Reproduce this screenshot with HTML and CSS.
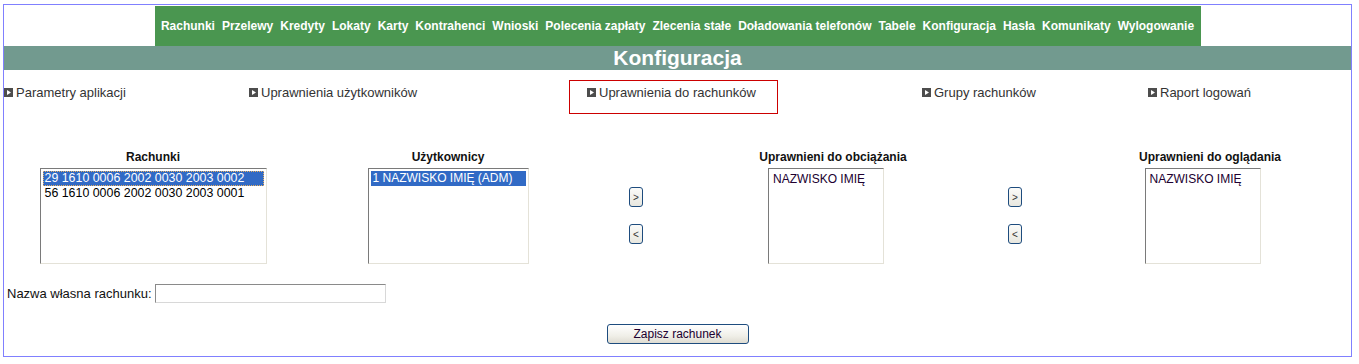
FILE: index.html
```html
<!DOCTYPE html>
<html lang="pl">
<head>
<meta charset="utf-8">
<title>Konfiguracja</title>
<link rel="stylesheet" href="styles.css">
</head>
<body>
<div class="frame">
  <nav class="menu">
    <a>Rachunki</a><a>Przelewy</a><a>Kredyty</a><a>Lokaty</a><a>Karty</a><a>Kontrahenci</a><a>Wnioski</a><a>Polecenia zapłaty</a><a>Zlecenia stałe</a><a>Doładowania telefonów</a><a>Tabele</a><a>Konfiguracja</a><a>Hasła</a><a>Komunikaty</a><a>Wylogowanie</a>
  </nav>
  <div class="title">Konfiguracja</div>
  <div class="tabs">
    <div class="tab t1"><svg class="ico" width="9" height="9" viewBox="0 0 9 9"><rect width="9" height="9" fill="#4d4d4d"/><path d="M3 2 L7 4.5 L3 7 Z" fill="#fff"/></svg>Parametry aplikacji</div>
    <div class="tab t2"><svg class="ico" width="9" height="9" viewBox="0 0 9 9"><rect width="9" height="9" fill="#4d4d4d"/><path d="M3 2 L7 4.5 L3 7 Z" fill="#fff"/></svg>Uprawnienia użytkowników</div>
    <div class="tab t3"><div class="active"><svg class="ico" width="9" height="9" viewBox="0 0 9 9"><rect width="9" height="9" fill="#4d4d4d"/><path d="M3 2 L7 4.5 L3 7 Z" fill="#fff"/></svg>Uprawnienia do rachunków</div></div>
    <div class="tab t4"><svg class="ico" width="9" height="9" viewBox="0 0 9 9"><rect width="9" height="9" fill="#4d4d4d"/><path d="M3 2 L7 4.5 L3 7 Z" fill="#fff"/></svg>Grupy rachunków</div>
    <div class="tab t5"><svg class="ico" width="9" height="9" viewBox="0 0 9 9"><rect width="9" height="9" fill="#4d4d4d"/><path d="M3 2 L7 4.5 L3 7 Z" fill="#fff"/></svg>Raport logowań</div>
  </div>
  <div class="lists">
    <div class="col c1">
      <div class="head">Rachunki</div>
      <div class="listbox lb1">
        <div class="opt sel focus">29 1610 0006 2002 0030 2003 0002</div>
        <div class="opt">56 1610 0006 2002 0030 2003 0001</div>
      </div>
    </div>
    <div class="col c2">
      <div class="head">Użytkownicy</div>
      <div class="listbox lb2">
        <div class="opt sel">1 NAZWISKO IMIĘ (ADM)</div>
      </div>
    </div>
    <div class="col btns c3">
      <button class="mv">&gt;</button>
      <button class="mv">&lt;</button>
    </div>
    <div class="col c4">
      <div class="head">Uprawnieni do obciążania</div>
      <div class="listbox lb3 shift14">
        <div class="opt">NAZWISKO IMIĘ</div>
      </div>
    </div>
    <div class="col btns c5">
      <button class="mv">&gt;</button>
      <button class="mv">&lt;</button>
    </div>
    <div class="col c6">
      <div class="head">Uprawnieni do oglądania</div>
      <div class="listbox lb3 shift15">
        <div class="opt">NAZWISKO IMIĘ</div>
      </div>
    </div>
  </div>
  <div class="namerow">
    <label class="lbl">Nazwa własna rachunku:</label>
    <input class="txt" type="text">
  </div>
  <div class="saverow">
    <button class="save">Zapisz rachunek</button>
  </div>
</div>
</body>
</html>
```

FILE: styles.css
```css
* { box-sizing: border-box; }
html, body { margin: 0; padding: 0; background: #fff; }
body {
  font-family: "Liberation Sans", Arial, sans-serif;
  font-size: 12px;
  color: #000;
}
.frame {
  margin: 4px 0 0 3px;
  width: 1349px;
  height: 353px;
  border: 1px solid #8080ff;
}
.menu {
  width: 1046px;
  height: 40px;
  margin: 1px auto 0;
  background: #4a9650;
  display: flex;
  align-items: center;
  justify-content: center;
  gap: 7px;
}
.menu a {
  color: #fff;
  font-weight: bold;
  font-size: 12px;
  white-space: nowrap;
}
.title {
  height: 24px;
  background: #729a8f;
  color: #fff;
  font-weight: bold;
  font-size: 21px;
  line-height: 24px;
  text-align: center;
}
.tabs {
  display: flex;
  margin-top: 10px;
  height: 34px;
  color: #333;
  font-size: 13px;
}
.tab {
  display: flex;
  align-items: flex-start;
  line-height: 14px;
  padding-top: 6px;
  white-space: nowrap;
}
.tab .ico { margin: 2px 3px 0 0; flex: none; }
.t1 { width: 245px; }
.t2 { width: 320px; }
.t3 { width: 353px; padding-top: 0; }
.t4 { width: 226px; }
.t5 { flex: 1; }
.active {
  width: 209px;
  height: 34px;
  border: 1px solid #cc0000;
  padding: 5px 0 0 17px;
  display: flex;
  align-items: flex-start;
}
.lists {
  display: flex;
  margin-top: 36px;
  height: 114px;
}
.col {
  display: flex;
  flex-direction: column;
  align-items: center;
}
.head {
  font-weight: bold;
  line-height: 14px;
  height: 14px;
  margin-bottom: 4px;
  color: #111;
  white-space: nowrap;
}
.c1 { width: 298px; }
.c2 { width: 292px; }
.c3 { width: 84px; }
.c4 { width: 310px; }
.c5 { width: 54px; }
.c6 { width: 308px; padding-left: 28px; }
.listbox {
  height: 96px;
  border: 1px solid;
  border-color: #7a7a7a #e4e2d8 #e4e2d8 #7a7a7a;
  padding: 2px;
  background: #fff;
}
.lb1 { width: 227px; }
.lb2 { width: 161px; }
.lb3 { width: 116px; }
.shift14 { margin-right: 14px; }
.shift15 { margin-right: 15px; }
.opt {
  height: 15px;
  line-height: 15px;
  padding-left: 2px;
  white-space: nowrap;
  color: #000;
}
.lb1 .opt { font-size: 12.4px; }
.lb3 .opt { padding-left: 2px; line-height: 16px; color: #200030; }
.opt.sel { background: #316ac5; color: #fff; }
.opt.focus { outline: 1px dotted #e8b060; outline-offset: -1px; }
.btns {
  padding-top: 37px;
  gap: 17px;
}
.mv {
  width: 14px;
  height: 20px;
  padding: 0;
  margin: 0;
  font-family: "Liberation Sans", Arial, sans-serif;
  font-size: 10px;
  color: #333;
  border: 1px solid #1e4c7e;
  border-radius: 3px;
  background: linear-gradient(#fbfbf9, #e8e7df);
}
.namerow {
  display: flex;
  align-items: center;
  margin-top: 20px;
  padding-left: 3px;
  gap: 3px;
  height: 19px;
}
.lbl { color: #111; white-space: nowrap; font-size: 13px; }
.txt {
  width: 231px;
  height: 19px;
  margin: 0;
  border: 1px solid;
  border-color: #8a8a8a #d8d8d8 #d8d8d8 #8a8a8a;
  padding: 0 2px;
  font-family: "Liberation Sans", Arial, sans-serif;
  font-size: 12px;
}
.saverow {
  display: flex;
  justify-content: center;
  margin-top: 21px;
}
.save {
  width: 142px;
  height: 20px;
  margin: 0;
  padding: 0;
  font-family: "Liberation Sans", Arial, sans-serif;
  font-size: 12px;
  color: #200030;
  border: 1px solid #1e4c7e;
  border-radius: 3px;
  background: linear-gradient(#ffffff, #f0efe8 60%, #dedcd2);
}
```
